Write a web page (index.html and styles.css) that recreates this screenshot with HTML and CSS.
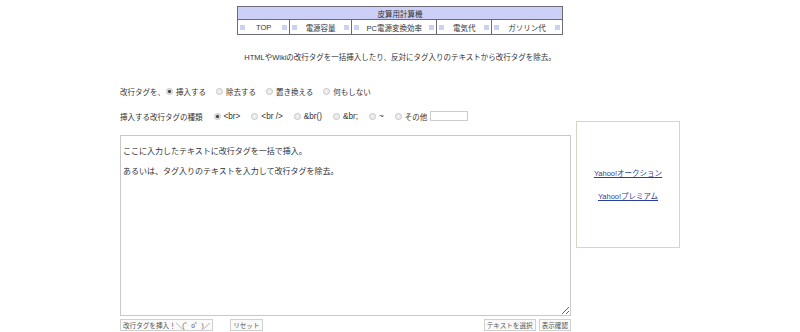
FILE: index.html
```html
<!DOCTYPE html>
<html lang="ja">
<head>
  <meta charset="UTF-8" />
  <title>改行タグ挿入・除去</title>
  <link rel="stylesheet" href="styles.css">
</head>
<body>
  <table class="nav">
    <tr><th colspan="5">皮算用計算機</th></tr>
    <tr>
      <td class="c1"><div class="cell"><span class="sq"></span><span class="txt">TOP</span><span class="sq"></span></div></td>
      <td class="c2"><div class="cell"><span class="sq"></span><span class="txt">電源容量</span><span class="sq"></span></div></td>
      <td class="c3"><div class="cell"><span class="sq"></span><span class="txt">PC電源変換効率</span><span class="sq"></span></div></td>
      <td class="c4"><div class="cell"><span class="sq"></span><span class="txt">電気代</span><span class="sq"></span></div></td>
      <td class="c5"><div class="cell"><span class="sq"></span><span class="txt">ガソリン代</span><span class="sq"></span></div></td>
    </tr>
  </table>

  <p class="lead">HTMLやWikiの改行タグを一括挿入したり、反対にタグ入りのテキストから改行タグを除去。</p>

  <div class="main">
    <div class="row">
      <span class="label">改行タグを、</span>
      <label class="opt first"><input type="radio" name="mode" checked>挿入する</label>
      <label class="opt"><input type="radio" name="mode">除去する</label>
      <label class="opt"><input type="radio" name="mode">置き換える</label>
      <label class="opt"><input type="radio" name="mode">何もしない</label>
    </div>
    <div class="row row2">
      <span class="label">挿入する改行タグの種類</span>
      <label class="opt tag"><input type="radio" name="tag" checked>&lt;br&gt;</label>
      <label class="opt tag"><input type="radio" name="tag">&lt;br /&gt;</label>
      <label class="opt tag"><input type="radio" name="tag">&amp;br()</label>
      <label class="opt tag"><input type="radio" name="tag">&amp;br;</label>
      <label class="opt tag"><input type="radio" name="tag">~</label>
      <label class="opt"><input type="radio" name="tag">その他</label>
      <input type="text" class="other">
    </div>

    <div class="work">
      <div class="left">
        <textarea class="src">

ここに入力したテキストに改行タグを一括で挿入。

あるいは、タグ入りのテキストを入力して改行タグを除去。</textarea>
        <div class="buttons">
          <button class="btn">改行タグを挿入！＼(゜o゜)／</button>
          <button class="btn reset">リセット</button>
          <span class="spacer"></span>
          <button class="btn">テキストを選択</button>
          <button class="btn">表示確認</button>
        </div>
      </div>
      <div class="side">
        <a href="#">Yahoo!オークション</a>
        <a href="#">Yahoo!プレミアム</a>
      </div>
    </div>
  </div>
</body>
</html>
```

FILE: styles.css
```css
body {
  margin: 0;
  padding-top: 6px;
  font-family: "Liberation Sans", "Noto Sans CJK JP", sans-serif;
  font-size: 7.5px;
  color: #333;
  background: #fff;
}
.nav {
  border-collapse: collapse;
  width: 326px;
  margin: 0 auto;
  border: 1px solid #6a6a78;
}
.nav th {
  background: #ccd0f6;
  font-weight: normal;
  height: 12px;
  padding: 0;
  border-bottom: 1px solid #6a6a78;
}
.nav td {
  height: 14px;
  padding: 0 2px;
  border-left: 1px solid #6a6a78;
}
.nav .c1 { width: 50px; }
.nav .c2 { width: 62px; }
.nav .c3 { width: 88px; }
.nav .c4 { width: 54px; }
.nav .c5 { width: 72px; }
.cell {
  display: flex;
  align-items: center;
}
.cell .txt {
  flex: 1;
  text-align: center;
}
.cell .sq {
  width: 5px;
  height: 5px;
  background: #cad2f2;
}
.lead {
  text-align: center;
  margin: 18px 0 0;
  line-height: 10px;
}
.main {
  width: 560px;
  margin: 0 auto;
}
.row {
  display: flex;
  align-items: center;
  height: 10px;
  margin-top: 23px;
}
.row2 {
  margin-top: 15px;
}
.opt {
  display: inline-flex;
  align-items: center;
  margin-left: 10px;
}
.row2 .opt {
  margin-left: 11px;
}
.opt.first {
  margin-left: 1px;
}
.opt.tag {
  font-size: 8.2px;
}
.opt input {
  appearance: none;
  box-sizing: border-box;
  width: 7px;
  height: 7px;
  margin: 0 3px 0 0;
  border: 1px solid #c4c4c4;
  border-radius: 50%;
  background: #eee;
}
.opt input:checked {
  background: radial-gradient(circle, #444 1.3px, #ddd 1.6px);
}
.other {
  width: 38px;
  height: 10px;
  margin-left: 3px;
  padding: 0;
  border: 1px solid #ccc;
  box-sizing: border-box;
}
.work {
  display: flex;
  gap: 5px;
}
.left {
  width: 451px;
}
.src {
  display: block;
  box-sizing: border-box;
  width: 451px;
  height: 181px;
  margin-top: 14px;
  padding: 1px 2px 0;
  border: 1px solid #c8c8c8;
  font-family: "Liberation Sans", "Noto Sans CJK JP", sans-serif;
  font-size: 8px;
  line-height: 10px;
  color: #333;
}
.buttons {
  display: flex;
  margin-top: 3px;
  gap: 3px;
}
.btn {
  height: 12px;
  padding: 0 2px;
  border: 1px solid #d0d0d0;
  background: #fafafa;
  font-family: "Liberation Sans", "Noto Sans CJK JP", sans-serif;
  font-size: 6.6px;
  color: #555;
}
.btn.reset {
  margin-left: 14px;
}
.spacer {
  flex: 1;
}
.side {
  box-sizing: border-box;
  width: 104px;
  height: 127px;
  border: 1px solid #d8d5c6;
  display: flex;
  flex-direction: column;
  align-items: center;
  padding-top: 47px;
  gap: 13px;
}
.side a {
  color: #2c3f9a;
  font-size: 7.5px;
  line-height: 10px;
}
```
